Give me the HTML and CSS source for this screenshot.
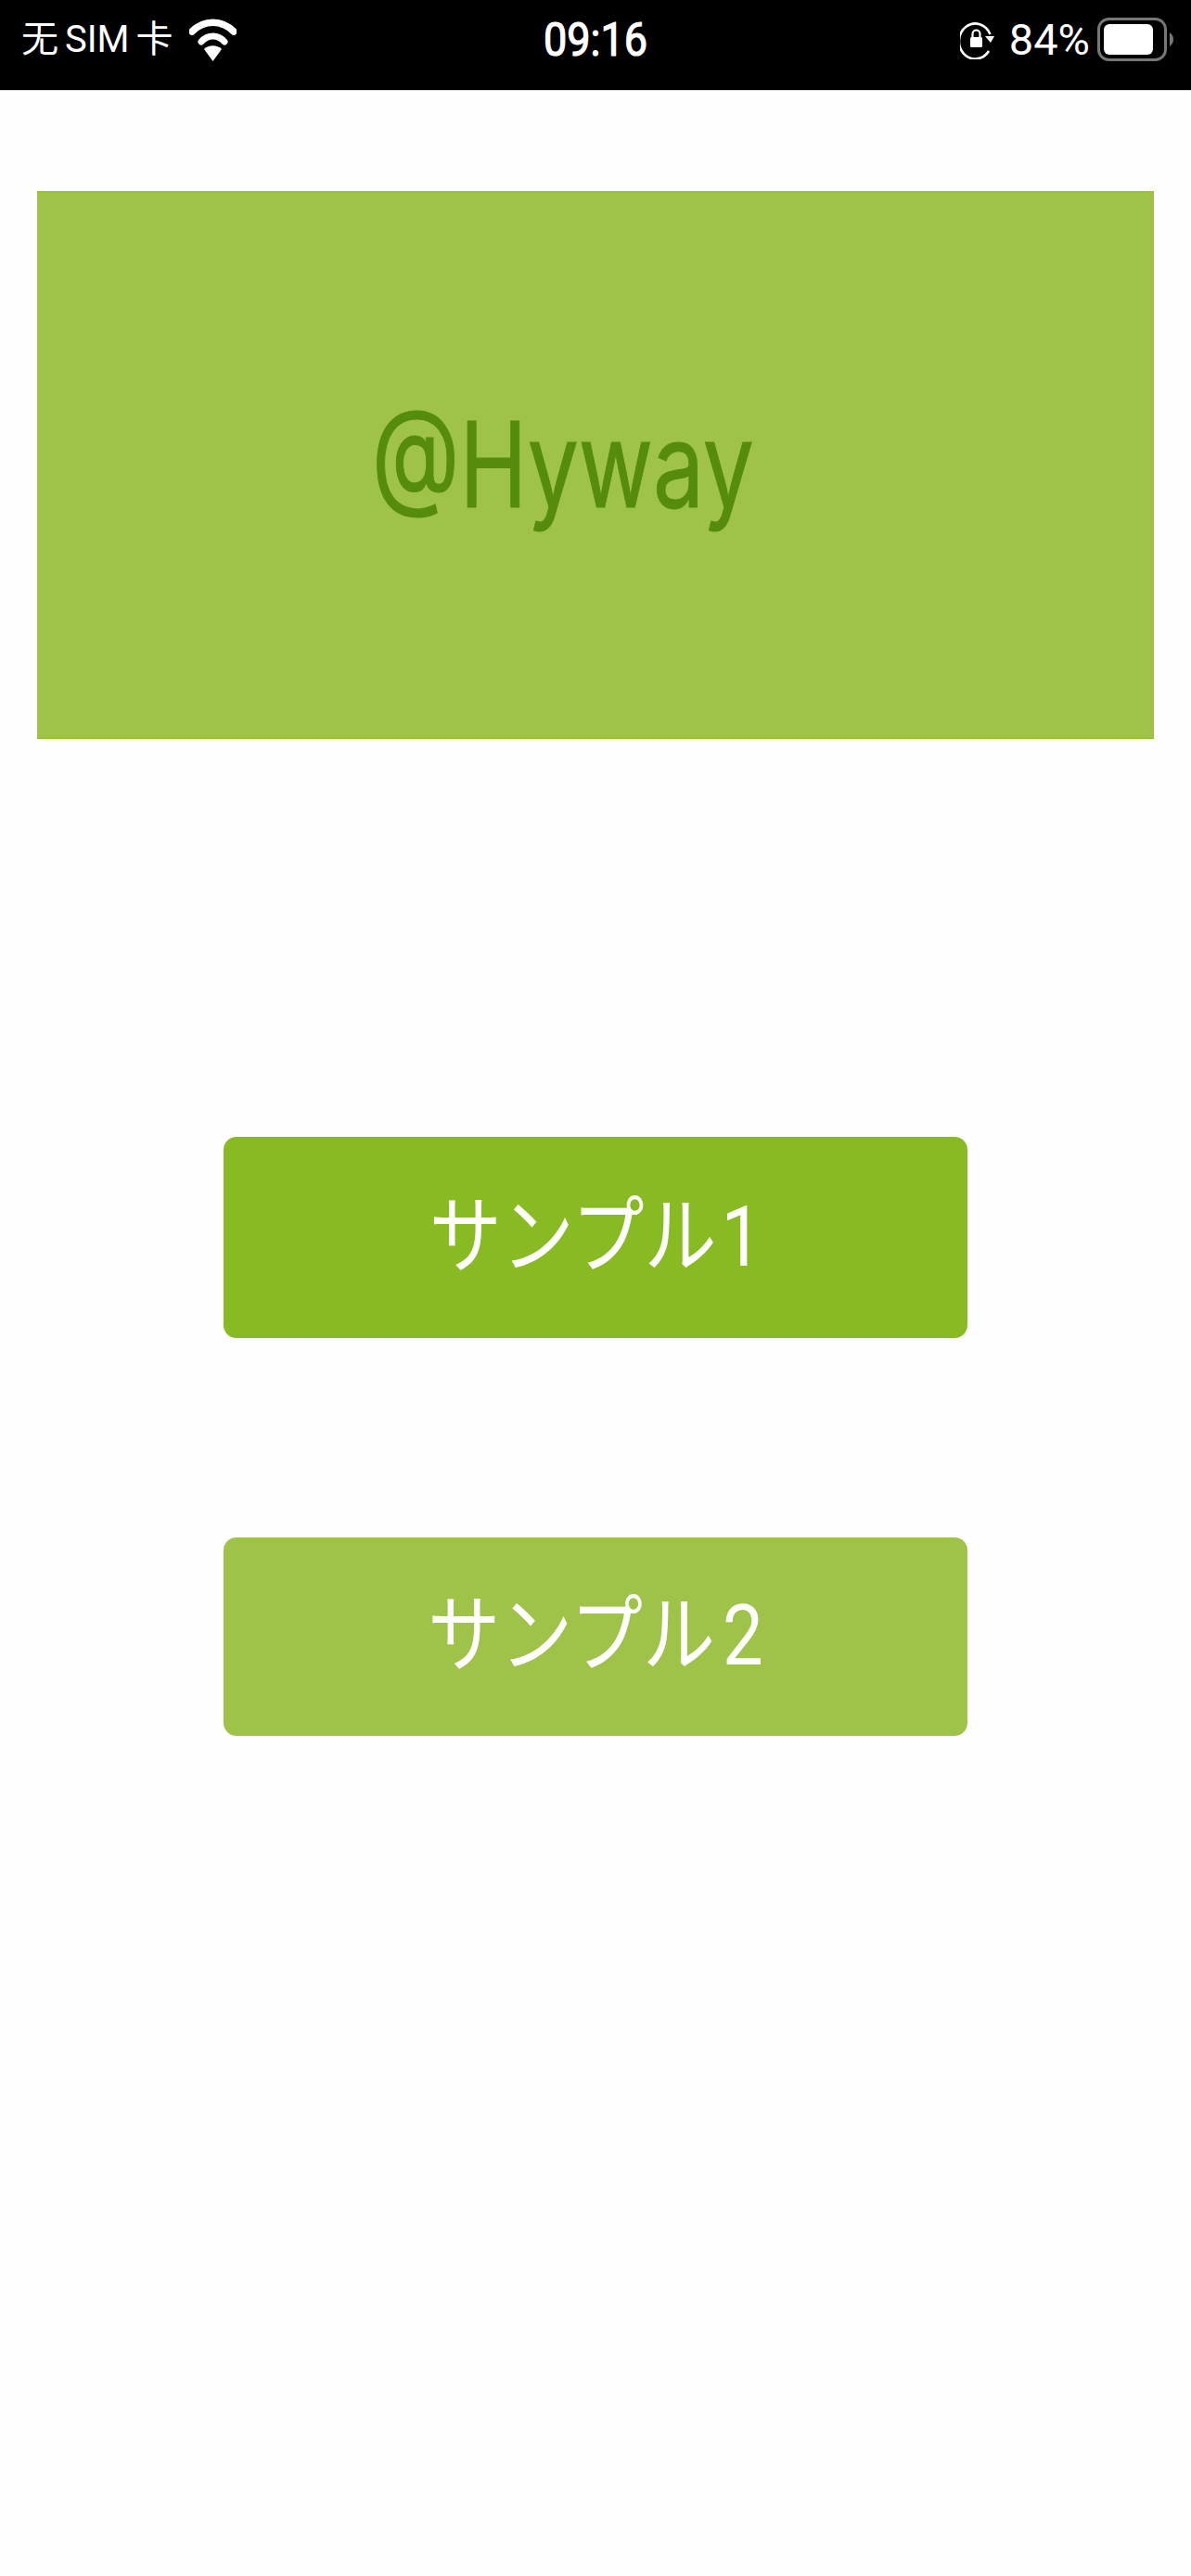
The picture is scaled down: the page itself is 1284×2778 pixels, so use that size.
FILE: index.html
```html
<!DOCTYPE html>
<html lang="ja">
<head>
<meta charset="utf-8">
<title>Sample</title>
<link rel="stylesheet" href="styles.css">
</head>
<body>
<header class="status">
  <div class="status-left">
    <span class="carrier">无 SIM 卡</span>
    <svg class="wifi" viewBox="0 0 51 46" aria-hidden="true">
      <path d="M3 14 C16 1 35 1 48 14" fill="none" stroke="#fff" stroke-width="7.5" stroke-linecap="round"/>
      <path d="M13 25 C20 17 31 17 38 25" fill="none" stroke="#fff" stroke-width="7" stroke-linecap="round"/>
      <path d="M16 33 C21 28 30 28 35 33 L25.5 46 Z" fill="#fff"/>
    </svg>
  </div>
  <div class="time">09:16</div>
  <div class="status-right">
    <svg class="rotlock" viewBox="0 0 38 42" aria-hidden="true">
      <path d="M31 33 A17.5 19 0 1 1 32.5 15" fill="none" stroke="#fff" stroke-width="2.6"/>
      <path d="M27 17 L37 17 L33 24 Z" fill="#fff"/>
      <rect x="11" y="18" width="13" height="11" rx="1.5" fill="#fff"/>
      <path d="M13.5 18 V14.5 A4 4 0 0 1 21.5 14.5 V18" fill="none" stroke="#fff" stroke-width="2.2"/>
    </svg>
    <span class="percent">84%</span>
    <svg class="battery" viewBox="0 0 82 48" aria-hidden="true">
      <rect x="1.5" y="1.5" width="72" height="44" rx="11" fill="none" stroke="#777" stroke-width="3"/>
      <rect x="7" y="7" width="53" height="33" rx="6" fill="#fff"/>
      <path d="M78 16 C81 18 82 21 82 23.5 C82 26 81 29 78 31 Z" fill="#777"/>
    </svg>
  </div>
</header>
<main class="page">
  <section class="hero"><span class="hero-text">@Hyway</span></section>
  <div class="actions">
    <button class="btn btn-primary" type="button"><span class="btn-text">サンプル<span class="digit">1</span></span></button>
    <button class="btn btn-secondary" type="button"><span class="btn-text">サンプル<span class="digit">2</span></span></button>
  </div>
</main>
</body>
</html>
```
FILE: styles.css
```css
* { box-sizing: border-box; }
html, body { margin: 0; padding: 0; }
body {
  width: 1284px;
  height: 2778px;
  background: #fefefe;
  font-family: Roboto, "Noto Sans CJK JP", sans-serif;
  overflow: hidden;
}
.status {
  height: 98px;
  background: #000;
  border-bottom: 1px solid #d8d8d8;
  color: #fff;
  display: grid;
  grid-template-columns: 1fr auto 1fr;
  align-items: center;
  padding: 0 19px 12px 19px;
}
.status-left { display: flex; align-items: center; gap: 18px; margin-left: 4px; }
.carrier {
  font-size: 40px;
  font-family: Roboto, "Noto Sans CJK SC", sans-serif;
  font-weight: 400;
  word-spacing: -3px;
  line-height: 46px;
  display: inline-block;
}
.wifi { width: 51px; height: 46px; display: block; }
.time {
  font-size: 45px;
  font-weight: 400;
  line-height: 50px;
  transform: scaleY(1.13);
  -webkit-text-stroke: 1.1px #fff;
}
.status-right { display: flex; align-items: center; justify-content: flex-end; }
.rotlock { width: 38px; height: 42px; display: block; margin-right: 15px; }
.percent {
  font-size: 47px;
  font-weight: 400;
  line-height: 50px;
  margin-right: 8px;
  display: inline-block;
}
.battery { width: 82px; height: 48px; display: block; }
.page { padding-top: 108px; }
.hero {
  height: 591px;
  margin: 0 40px 0 39.5px;
  background: #9ec348;
  border-top: 2px solid #98c42e;
  border-bottom: 2px solid #98c42e;
  display: flex;
  align-items: center;
  justify-content: center;
  padding: 0 70px 0 0;
}
.hero-text {
  color: #558c0e;
  font-family: Inter, sans-serif;
  font-size: 98px;
  line-height: 1;
  transform: scaleY(1.3);
  -webkit-text-stroke: 0.8px #558c0e;
  display: inline-block;
}
.actions {
  margin-top: 429px;
  display: flex;
  flex-direction: column;
  align-items: center;
  gap: 215px;
}
.btn {
  width: 802px;
  border: 0;
  border-radius: 14px;
  color: #fff;
  font-family: inherit;
  padding: 0;
  display: flex;
  align-items: center;
  justify-content: center;
}
.btn-primary { background: #88bb22; height: 217px; }
.btn-secondary { background: #9ec348; height: 214px; }
.btn-secondary .digit { margin-left: 8px; }
.btn-text {
  font-size: 78px;
  font-weight: 400;
  line-height: 1;
  display: inline-block;
  transform: scaleY(1.16);
  white-space: nowrap;
}
.digit { margin-left: 5px; }
```
